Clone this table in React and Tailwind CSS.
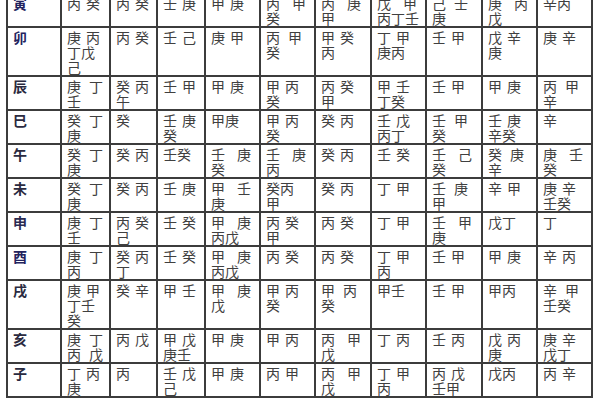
import React from "react";

const rows = [
  { l: "寅", c: "text-[#23235e]", cells: [["丙 癸"],["丙 癸"],["壬 庚"],["甲 庚"],["丙   甲","癸"],["丙   庚","甲"],["戊   甲","丙丁壬"],["己  壬","庚"],["庚   丙","戊"],["辛丙"]] },
  { l: "卯", c: "text-[#23235e]", cells: [["庚 丙","丁戊","己"],["丙 癸"],["壬 己"],["庚 甲"],["丙  甲","癸"],["甲 癸","丙"],["丁 甲","庚丙"],["壬 甲"],["戊 辛","庚"],["庚 辛"]] },
  { l: "辰", c: "text-[#2a2a40]", cells: [["庚  丁","壬"],["癸 丙","午"],["壬 甲"],["甲 庚"],["甲 丙","癸"],["丙 癸","甲"],["甲 壬","丁癸"],["壬 甲"],["甲 庚"],["丙  甲","辛"]] },
  { l: "巳", c: "text-[#2a2a40]", cells: [["癸  丁","庚"],["癸"],["壬 庚","癸"],["甲庚"],["甲 丙","癸"],["癸 丙"],["壬 戊","丙丁"],["壬  甲","癸"],["壬 庚","辛癸"],["辛"]] },
  { l: "午", c: "text-[#2a2a40]", cells: [["癸  丁","庚"],["癸 丙"],["壬癸"],["壬   庚","癸"],["壬   庚","丙"],["癸 丙"],["壬 癸"],["壬   己","癸"],["癸  庚","辛"],["庚   壬","癸"]] },
  { l: "未", c: "text-[#2a2a40]", cells: [["癸  丁","庚"],["癸 丙"],["壬 庚"],["甲   壬","庚"],["癸丙","甲"],["癸 丙"],["丁 甲"],["壬  庚","甲"],["辛 甲"],["庚 辛","壬癸"]] },
  { l: "申", c: "text-[#2a2a50]", cells: [["庚  丁","壬"],["丙 癸","己"],["壬 癸"],["甲   庚","丙戊"],["丙 癸","甲"],["丙 癸"],["丁 甲"],["壬   甲","庚"],["戊丁"],["丁"]] },
  { l: "酉", c: "text-[#23235e]", cells: [["庚  丁","丙"],["癸 丙","丁"],["壬 癸"],["甲   庚","丙戊"],["丙 癸"],["丙 癸"],["丁 甲","丙"],["壬 甲"],["甲 庚"],["辛 丙"]] },
  { l: "戌", c: "text-[#2a2a40]", cells: [["庚 甲","丁壬","癸"],["癸 辛"],["甲 壬"],["甲   庚","戊"],["甲 丙","癸"],["甲  丙","癸"],["甲壬"],["壬 甲"],["甲丙"],["辛  甲","壬癸"]] },
  { l: "亥", c: "text-[#2a2a40]", cells: [["庚  丁","丙  戊"],["丙 戊"],["甲 戊","庚壬"],["甲 庚"],["甲 丙"],["丙   甲","戊"],["丁 丙"],["壬 丙"],["戊 丙","庚"],["庚 辛","戊丁"]] },
  { l: "子", c: "text-[#2a2a40]", cells: [["丁 丙","庚"],["丙"],["壬 戊","己"],["甲 庚"],["丙 甲"],["丙   甲","戊"],["丁 甲","丙"],["丙 戊","壬甲"],["戊丙"],["丙 辛"]] },
];

const gapCls = { 1: "w-[5px]", 2: "w-[8px]", 3: "w-[12px]" };

function Line({ t }) {
  const parts = t.split(/( +)/).filter((p) => p.length);
  return (
    <div className="flex h-[15px] items-center">
      {parts.map((p, i) =>
        p[0] === " " ? (
          <span key={i} className={`inline-block shrink-0 ${gapCls[Math.min(p.length, 3)]}`} />
        ) : (
          <span key={i}>{p}</span>
        )
      )}
    </div>
  );
}

export default function App() {
  return (
    <div className="w-[600px] h-[400px] overflow-hidden bg-white font-['Noto_Sans_CJK_SC','Noto_Sans',sans-serif]">
      <div className="ml-[6px] mt-[-8px] w-[587px] grid grid-cols-[52px_47px_45px_46px_53px_53px_54px_53px_54px_53px_53px] gap-[2px] p-[2px] bg-[#3c3c3c]">
        {rows.map((r) => (
          <React.Fragment key={r.l}>
            <div className={`bg-white pl-[5px] pt-[2px] text-[14px] leading-[15px] font-bold ${r.c}`}>
              <div className="flex h-[15px] items-center">{r.l}</div>
            </div>
            {r.cells.map((lines, i) => (
              <div key={i} className="bg-white pl-[5px] pt-[2px] text-[14px] leading-[15px] text-[#404040]">
                {lines.map((t, j) => (
                  <Line key={j} t={t} />
                ))}
              </div>
            ))}
          </React.Fragment>
        ))}
      </div>
    </div>
  );
}
